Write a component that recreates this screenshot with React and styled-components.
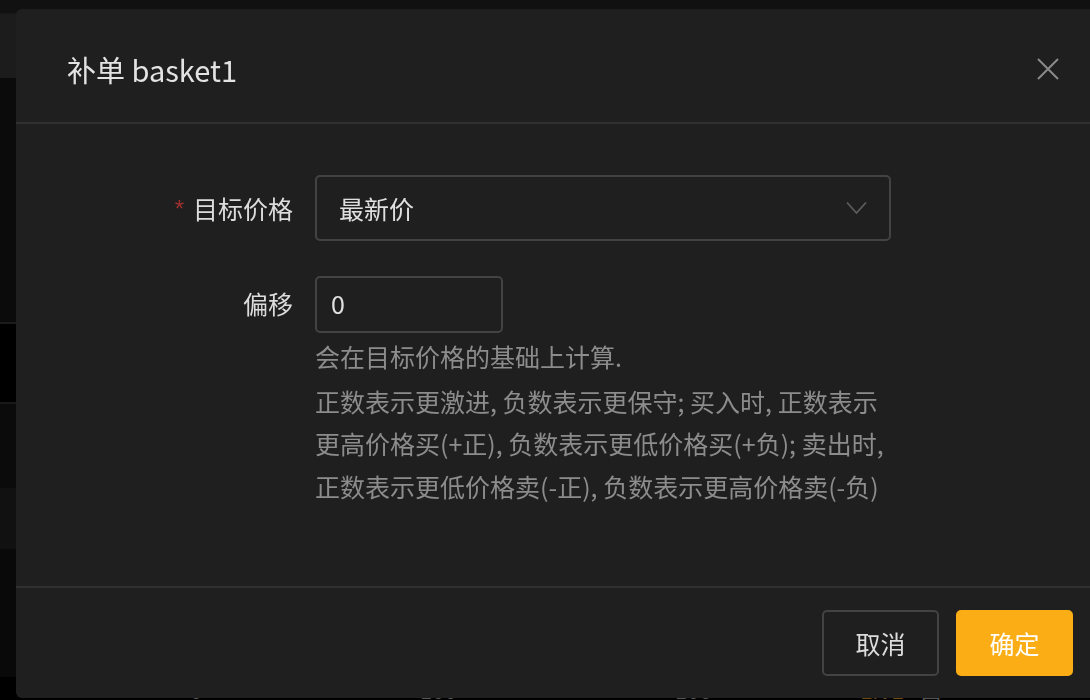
import React from "react";
import styled, { createGlobalStyle } from "styled-components";

const GlobalStyle = createGlobalStyle`
  html, body {
    margin: 0;
    padding: 0;
    height: 100%;
    overflow: hidden;
    background: #000;
    font-family: "Noto Sans CJK SC", "Noto Sans", sans-serif;
  }
  * { box-sizing: border-box; }
`;

// page behind the mask
const Workspace = styled.div`
  height: 700px;
  display: flex;
  flex-direction: column;
  background: #000;
`;

const Band = styled.div`
  height: ${(p) => p.h}px;
  background: ${(p) => p.bg};
  border-bottom: ${(p) => (p.line ? `2px solid ${p.line}` : "none")};
`;

const TableRow = styled.div`
  display: flex;
  padding-left: 190px;
  font-size: 22px;
  line-height: 1;
  color: #9a9a9a;
  padding-top: 1px;
`;

const Cell = styled.span`
  width: ${(p) => p.w}px;
  color: ${(p) => p.color || "inherit"};
`;

const Mask = styled.div`
  position: fixed;
  inset: 0;
  background: rgba(0, 0, 0, 0.45);
`;

const Modal = styled.div`
  position: fixed;
  left: 16px;
  top: 9px;
  width: 1085px;
  height: 689px;
  background: #1f1f1f;
  border-radius: 6px;
  display: flex;
  flex-direction: column;
  overflow: hidden;
`;

const Header = styled.div`
  height: 115px;
  padding: 6px 42px 0 51px;
  border-bottom: 2px solid #303030;
  display: flex;
  align-items: center;
  justify-content: space-between;
`;

const Title = styled.div`
  font-size: 29px;
  color: #e3e3e3;
`;

const CloseButton = styled.button`
  width: 22px;
  height: 22px;
  padding: 0;
  border: none;
  background: transparent;
  display: flex;
  cursor: pointer;
`;

const Body = styled.div`
  flex: 1;
  padding-top: 51px;
`;

const Form = styled.div`
  display: grid;
  grid-template-columns: 277px 576px;
  column-gap: 22px;
  row-gap: 35px;
  align-items: start;
`;

const Label = styled.div`
  height: ${(p) => p.h}px;
  display: flex;
  align-items: center;
  justify-content: flex-end;
  font-size: 25px;
  color: #dcdcdc;
  padding-bottom: ${(p) => p.lift || 0}px;
`;

const Required = styled.span`
  color: #a0302f;
  font-size: 24px;
  margin-right: 9px;
  font-family: "Liberation Sans", sans-serif;
  padding-top: 2px;
`;

const Control = styled.div`
  display: flex;
  flex-direction: column;
`;

const Select = styled.div`
  height: 66px;
  border: 2px solid #434343;
  border-radius: 5px;
  padding: 0 22px 0 22px;
  display: flex;
  align-items: center;
  justify-content: space-between;
  font-size: 25px;
  color: #e0e0e0;
`;

const Input = styled.div`
  width: 188px;
  height: 57px;
  border: 2px solid #434343;
  border-radius: 5px;
  padding: 0 0 3px 14px;
  display: flex;
  align-items: center;
  font-size: 25px;
  color: #e0e0e0;
`;

const Help = styled.div`
  margin-top: 2px;
  font-size: 25px;
  line-height: 42.5px;
  color: #8c8c8c;
`;

const HelpLead = styled.div`
  margin-bottom: 2px;
`;

const Footer = styled.div`
  height: 112px;
  border-top: 2px solid #303030;
  padding: 0 28px 0 0;
  display: flex;
  align-items: center;
  justify-content: flex-end;
  gap: 17px;
`;

const Button = styled.button`
  width: 117px;
  height: 66px;
  border-radius: 5px;
  font-family: inherit;
  font-size: 25px;
  cursor: pointer;
  border: 2px solid ${(p) => (p.primary ? "#faad14" : "#434343")};
  background: ${(p) => (p.primary ? "#faad14" : "transparent")};
  color: ${(p) => (p.primary ? "#ffffff" : "#dcdcdc")};
`;

const Chevron = () => (
  <svg width="21" height="14" viewBox="0 0 21 14" fill="none">
    <path d="M1 1.5 L10.5 12 L20 1.5" stroke="#5c5c5c" strokeWidth="1.8" />
  </svg>
);

const CloseIcon = () => (
  <svg width="22" height="22" viewBox="0 0 22 22" fill="none">
    <path d="M1 1 L21 21 M21 1 L1 21" stroke="#8a8a8a" strokeWidth="2" />
  </svg>
);

const bands = [
  { h: 15, bg: "#1f1f1f", line: "#2f2f2f" },
  { h: 64, bg: "#333333" },
  { h: 251, bg: "#141414", line: "#333333" },
  { h: 82, bg: "#000000", line: "#2f2f2f" },
  { h: 85, bg: "#141414" },
  { h: 63, bg: "#1f1f1f" },
  { h: 130, bg: "#121212" },
];

const App = () => {
  return (
    <>
      <GlobalStyle />
      <Workspace>
        {bands.map((b, i) => (
          <Band key={i} h={b.h} bg={b.bg} line={b.line} />
        ))}
        <TableRow>
          <Cell w={230}>0</Cell>
          <Cell w={255}>100</Cell>
          <Cell w={185}>100</Cell>
          <Cell w={60} color="#c88a14">LIVE</Cell>
          <Cell w={40}>口</Cell>
        </TableRow>
      </Workspace>
      <Mask />
      <Modal>
        <Header>
          <Title>补单 basket1</Title>
          <CloseButton aria-label="close">
            <CloseIcon />
          </CloseButton>
        </Header>
        <Body>
          <Form>
            <Label h={66}>
              <Required>*</Required>目标价格
            </Label>
            <Control>
              <Select>
                <span>最新价</span>
                <Chevron />
              </Select>
            </Control>
            <Label h={57} lift={3}>偏移</Label>
            <Control>
              <Input>0</Input>
              <Help>
                <HelpLead>会在目标价格的基础上计算.</HelpLead>
                正数表示更激进, 负数表示更保守; 买入时, 正数表示更高价格买(+正), 负数表示更低价格买(+负); 卖出时, 正数表示更低价格卖(-正), 负数表示更高价格卖(-负)
              </Help>
            </Control>
          </Form>
        </Body>
        <Footer>
          <Button>取消</Button>
          <Button primary>确定</Button>
        </Footer>
      </Modal>
    </>
  );
};

export default App;
